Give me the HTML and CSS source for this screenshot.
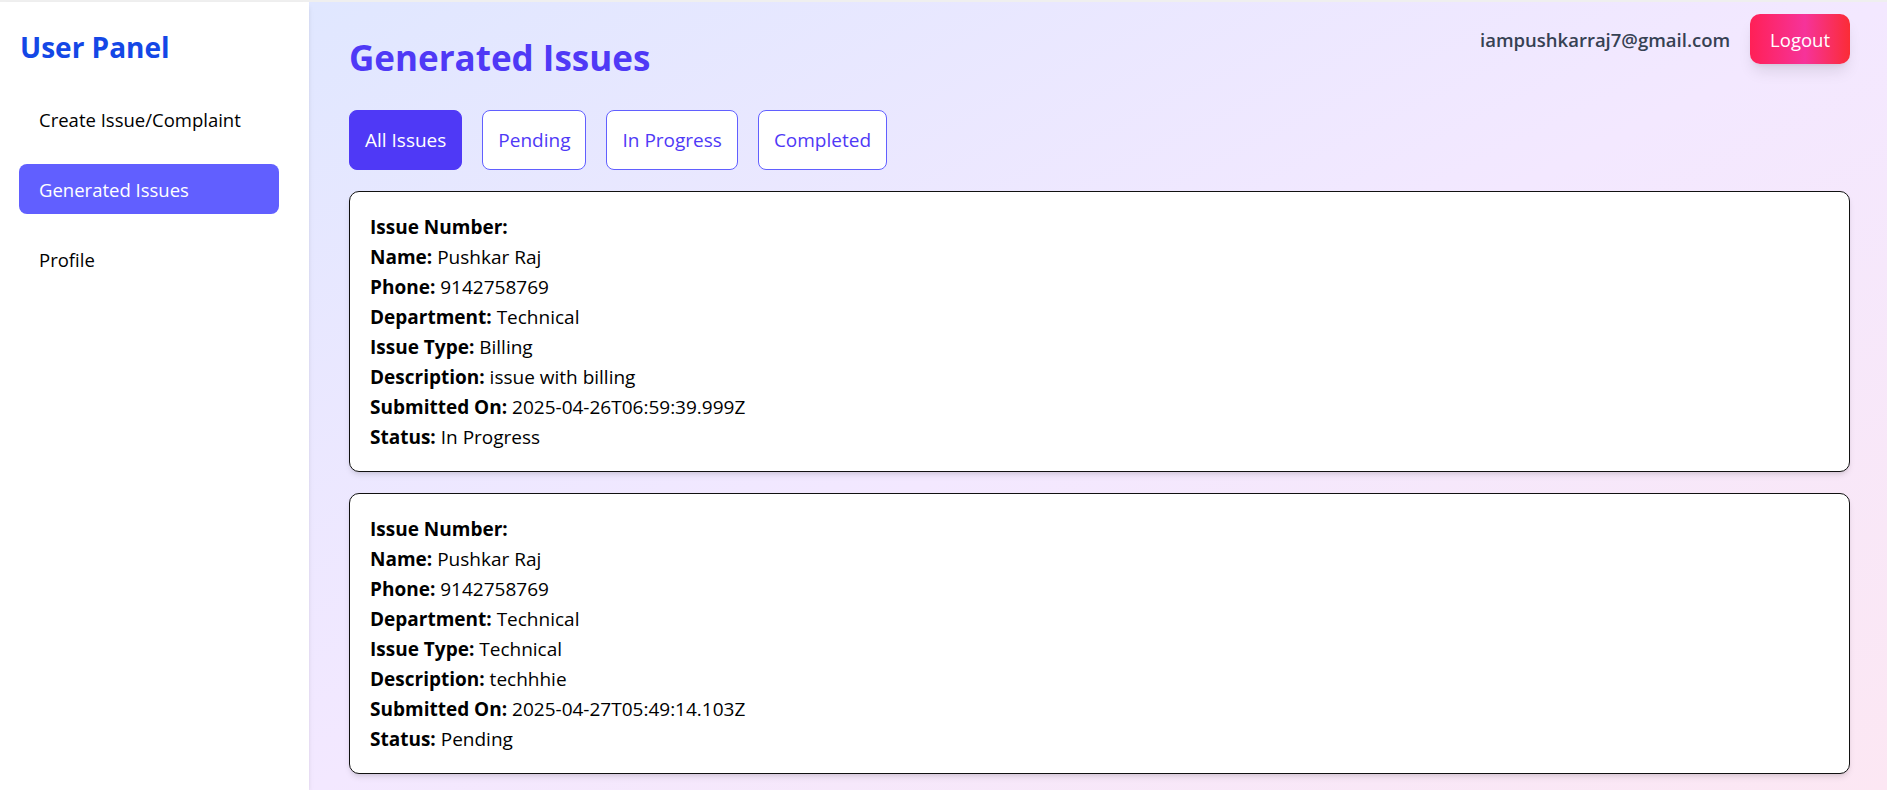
FILE: index.html
```html
<!DOCTYPE html>
<html lang="en">
<head>
<meta charset="utf-8">
<title>User Panel - Generated Issues</title>
<link rel="stylesheet" href="styles.css">
</head>
<body>
<div class="app">
  <aside class="sidebar">
    <h2 class="brand">User Panel</h2>
    <nav class="nav">
      <a class="nav-item">Create Issue/Complaint</a>
      <a class="nav-item active">Generated Issues</a>
      <a class="nav-item">Profile</a>
    </nav>
  </aside>
  <main class="main">
    <header class="header">
      <h1 class="title">Generated Issues</h1>
      <div class="user">
        <span class="email">iampushkarraj7@gmail.com</span>
        <button class="logout">Logout</button>
      </div>
    </header>
    <div class="tabs">
      <button class="tab active">All Issues</button>
      <button class="tab">Pending</button>
      <button class="tab">In Progress</button>
      <button class="tab">Completed</button>
    </div>
    <section class="list">
      <article class="card">
        <p><b>Issue Number:</b></p>
        <p><b>Name:</b> Pushkar Raj</p>
        <p><b>Phone:</b> 9142758769</p>
        <p><b>Department:</b> Technical</p>
        <p><b>Issue Type:</b> Billing</p>
        <p><b>Description:</b> issue with billing</p>
        <p><b>Submitted On:</b> 2025-04-26T06:59:39.999Z</p>
        <p><b>Status:</b> In Progress</p>
      </article>
      <article class="card">
        <p><b>Issue Number:</b></p>
        <p><b>Name:</b> Pushkar Raj</p>
        <p><b>Phone:</b> 9142758769</p>
        <p><b>Department:</b> Technical</p>
        <p><b>Issue Type:</b> Technical</p>
        <p><b>Description:</b> techhhie</p>
        <p><b>Submitted On:</b> 2025-04-27T05:49:14.103Z</p>
        <p><b>Status:</b> Pending</p>
      </article>
    </section>
  </main>
</div>
</body>
</html>
```
FILE: styles.css
```css
* { box-sizing: border-box; }
html, body { margin: 0; padding: 0; height: 100%; overflow: hidden; }
body {
  font-family: "Open Sans", "Noto Sans", sans-serif;
  font-size: 18.5px;
  color: #000;
  background: #fff;
}
.app {
  display: flex;
  height: 100vh;
  border-top: 2px solid #efefef;
}
.sidebar {
  width: 309px;
  flex-shrink: 0;
  background: #fff;
  padding: 0 30px 0 19px;
  position: relative;
  z-index: 1;
  box-shadow: 0 4px 6px -1px rgba(0,0,0,.1), 0 2px 4px -2px rgba(0,0,0,.1);
}
.brand {
  margin: 23px 0 0 1px;
  font-size: 28px;
  line-height: 44px;
  font-weight: 700;
  color: #1447e6;
}
.nav {
  display: flex;
  flex-direction: column;
  gap: 20px;
  margin-top: 25px;
}
.nav-item {
  display: flex;
  align-items: center;
  height: 50px;
  padding: 0 20px;
  border-radius: 8px;
  color: #000;
}
.nav-item.active {
  background: #615fff;
  color: #fff;
}
.main {
  flex: 1;
  padding: 12px 37px 0 40px;
  background: linear-gradient(to bottom right, #e0e7ff, #f3e8ff 50%, #fce7f3);
}
.header {
  display: flex;
  justify-content: space-between;
  align-items: flex-start;
}
.title {
  margin: 20px 0 0;
  font-size: 35px;
  line-height: 48px;
  font-weight: 700;
  color: #4f39f6;
}
.user {
  display: flex;
  align-items: center;
  gap: 20px;
}
.email {
  font-weight: 600;
  color: #364153;
}
.logout {
  height: 50px;
  padding: 0 20px;
  border: 0;
  border-radius: 10px;
  font: inherit;
  color: #fff;
  background: linear-gradient(to right, #ff2056, #f6339a 55%, #fb2c36);
  box-shadow: 0 10px 15px -3px rgba(0,0,0,.1), 0 4px 6px -4px rgba(0,0,0,.1);
}
.tabs {
  display: flex;
  gap: 20px;
  margin-top: 28px;
}
.tab {
  height: 60px;
  padding: 0 15px;
  border: 1px solid #615fff;
  border-radius: 8px;
  background: #fff;
  color: #4f39f6;
  font: inherit;
  font-size: 19px;
}
.tab.active {
  background: #4f39f6;
  border-color: #4f39f6;
  color: #fff;
}
.list {
  display: flex;
  flex-direction: column;
  gap: 21px;
  margin-top: 21px;
}
.card {
  background: #fff;
  border: 1px solid #111;
  border-radius: 10px;
  padding: 20px 20px 19px;
  font-size: 19px;
  box-shadow: 0 4px 6px -1px rgba(0,0,0,.1), 0 2px 4px -2px rgba(0,0,0,.1);
}
.card p {
  margin: 0;
  line-height: 30px;
}
.card b { font-weight: 700; }
```
